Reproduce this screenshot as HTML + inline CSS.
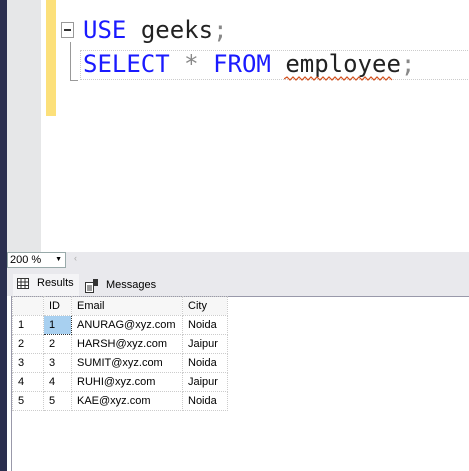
<!DOCTYPE html>
<html><head><style>
body{margin:0;width:469px;height:471px;position:relative;overflow:hidden;background:#fff;font-family:"Liberation Sans",sans-serif}
.a{position:absolute}
.code{font-family:"DejaVu Sans Mono","Liberation Mono",monospace;font-size:24px;white-space:pre;line-height:26px}
.kw{color:#1a1aff}
.id{color:#222}
.g{color:#888}
table{border-collapse:collapse;font-size:11px;color:#000;table-layout:fixed;width:215px}
td{border:1px dotted #ccc;height:18px;padding:0 0 0 5px;white-space:nowrap;overflow:hidden}
</style></head><body>
<div class="a" style="left:0;top:0;width:7px;height:471px;background:#2b2f4f"></div>
<div class="a" style="left:7px;top:0;width:34px;height:252px;background:#e6e7e8"></div>
<div class="a" style="left:46px;top:0;width:10px;height:116px;background:#fce07a"></div>
<div class="a" style="left:61px;top:22px;width:13px;height:16px;border:1px solid #999;box-sizing:border-box"></div>
<div class="a" style="left:64px;top:29px;width:7px;height:2px;background:#333"></div>
<div class="a" style="left:70px;top:42px;width:1px;height:39px;background:#999"></div>
<div class="a" style="left:70px;top:80px;width:8px;height:1px;background:#999"></div>
<div class="a" style="left:80px;top:50px;width:400px;height:30px;border:1px dotted #ccc;box-sizing:border-box"></div>
<div class="a code" style="left:83px;top:17px"><span class="kw">USE</span> <span class="id">geeks</span><span class="g">;</span></div>
<div class="a code" style="left:83px;top:51px"><span class="kw">SELECT</span> <span class="g">*</span> <span class="kw">FROM</span> <span class="id">employee</span><span class="g">;</span></div>
<svg class="a" style="left:284px;top:76px" width="112" height="6"><path d="M0 3 l3 -2 l3 3 l3 -3 l3 3 l3 -3 l3 3 l3 -3 l3 3 l3 -3 l3 3 l3 -3 l3 3 l3 -3 l3 3 l3 -3 l3 3 l3 -3 l3 3 l3 -3 l3 3 l3 -3 l3 3 l3 -3 l3 3 l3 -3 l3 3 l3 -3 l3 3 l3 -3 l3 3 l3 -3 l3 3 l3 -3 l3 3 l3 -3 l3 3" stroke="#d2501e" fill="none" stroke-width="1.2"/></svg>
<div class="a" style="left:7px;top:252px;width:462px;height:44px;background:#e9e9ed"></div>
<div class="a" style="left:7px;top:252px;width:59px;height:16px;background:#fff;border:1px solid #9aa;box-sizing:border-box;font-size:11px;line-height:14px;padding-left:2px">200 %<span style="position:absolute;right:3px;font-size:7px">▼</span></div>
<div class="a" style="left:74px;top:253px;font-size:9px;color:#aaa">‹</div>
<div class="a" style="left:13px;top:274px;width:66px;height:22px;background:#f4f4f6"></div>
<svg class="a" style="left:17px;top:278px" width="12" height="11"><rect x="0.5" y="0.5" width="11" height="10" fill="#fff" stroke="#333"/><path d="M0 4h12M0 7.5h12M4 0v11M8 0v11" stroke="#333"/></svg>
<div class="a" style="left:37px;top:277px;font-size:11px">Results</div>
<svg class="a" style="left:85px;top:279px" width="14" height="14"><rect x="0.5" y="3.5" width="8" height="10" fill="#fff" stroke="#333"/><path d="M2 7h5M2 9h5M2 11h5" stroke="#333"/><rect x="8" y="0" width="5" height="7" fill="#333"/></svg>
<div class="a" style="left:106px;top:279px;font-size:11px">Messages</div>
<div class="a" style="left:11px;top:296px;width:458px;height:175px;border-left:1px solid #99a;border-top:1px solid #99a;box-sizing:border-box"></div>
<table class="a" style="left:12px;top:296px">
<colgroup><col style="width:31px"><col style="width:28px"><col style="width:111px"><col style="width:45px"></colgroup>
<tr style="background:#f7f7f7"><td></td><td>ID</td><td>Email</td><td>City</td></tr>
<tr><td>1</td><td style="background:#a8d0f0;border:1px dotted #333">1</td><td>ANURAG@xyz.com</td><td>Noida</td></tr>
<tr><td>2</td><td>2</td><td>HARSH@xyz.com</td><td>Jaipur</td></tr>
<tr><td>3</td><td>3</td><td>SUMIT@xyz.com</td><td>Noida</td></tr>
<tr><td>4</td><td>4</td><td>RUHI@xyz.com</td><td>Jaipur</td></tr>
<tr><td>5</td><td>5</td><td>KAE@xyz.com</td><td>Noida</td></tr>
</table>
</body></html>
